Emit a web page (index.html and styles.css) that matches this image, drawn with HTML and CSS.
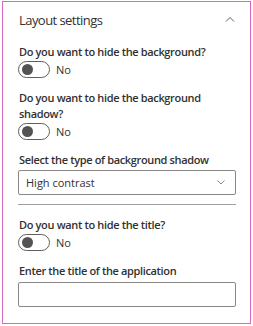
FILE: index.html
```html
<!DOCTYPE html>
<html>
<head>
<meta charset="utf-8">
<link rel="stylesheet" href="styles.css">
</head>
<body>
<div class="panel">
  <div class="header">
    <span class="title">Layout settings</span>
    <svg class="chev" width="10" height="6" viewBox="0 0 10 6"><path d="M1 5.5 L5 1.5 L9 5.5" fill="none" stroke="#605e5c" stroke-width="1"/></svg>
  </div>
  <div class="label first">Do you want to hide the background?</div>
  <div class="toggle-row"><span class="toggle"><span class="knob"></span></span><span class="state">No</span></div>
  <div class="label">Do you want to hide the background shadow?</div>
  <div class="toggle-row"><span class="toggle"><span class="knob"></span></span><span class="state">No</span></div>
  <div class="label">Select the type of background shadow</div>
  <div class="dropdown"><span>High contrast</span>
    <svg width="8" height="5" viewBox="0 0 8 5"><path d="M0.5 0.5 L4 4 L7.5 0.5" fill="none" stroke="#8a8886" stroke-width="1"/></svg>
  </div>
  <div class="divider"></div>
  <div class="label">Do you want to hide the title?</div>
  <div class="toggle-row"><span class="toggle"><span class="knob"></span></span><span class="state">No</span></div>
  <div class="label">Enter the title of the application</div>
  <div class="input"></div>
</div>
</body>
</html>
```
FILE: styles.css
```css
html, body { margin: 0; padding: 0; background: #fff; }
body { font-family: "Open Sans", "Noto Sans", sans-serif; color: #323130; }
.panel {
  margin: 1px 0 0 2px;
  width: 249px;
  height: 323px;
  box-sizing: border-box;
  border: 1px solid #d868c2;
  padding: 0 14px 0 15px;
  display: flex;
  flex-direction: column;
}
.header {
  height: 35px;
  display: flex;
  align-items: center;
  justify-content: space-between;
  padding-left: 1px;
  padding-right: 1px;
}
.title { font-size: 13px; font-weight: 400; letter-spacing: -0.55px; color: #323130; }
.chev { margin-right: 0; margin-top: -1px; }
.label {
  font-size: 11px;
  font-weight: 600;
  letter-spacing: -0.35px;
  line-height: 16px;
  margin-top: 12px;
  padding-left: 1px;
}
.label.first { margin-top: 7px; }
.toggle-row {
  display: flex;
  align-items: center;
  margin-top: 1px;
  height: 17px;
}
.toggle {
  width: 32px;
  height: 17px;
  box-sizing: border-box;
  border: 1px solid #605e5c;
  border-radius: 9px;
  display: flex;
  align-items: center;
  padding-left: 3px;
}
.knob {
  width: 11px;
  height: 11px;
  border-radius: 50%;
  background: #555352;
}
.state { font-size: 11px; margin-left: 6px; }
.dropdown {
  margin-top: 2px;
  height: 25px;
  box-sizing: border-box;
  border: 1px solid #8a8886;
  border-radius: 2px;
  display: flex;
  align-items: center;
  justify-content: space-between;
  padding: 0 10px 0 7px;
  font-size: 11px;
}
.divider { height: 1px; background: #a19f9d; margin-top: 9px; }
.input {
  margin-top: 3px;
  height: 25px;
  box-sizing: border-box;
  border: 1px solid #8a8886;
  border-radius: 2px;
}
```
